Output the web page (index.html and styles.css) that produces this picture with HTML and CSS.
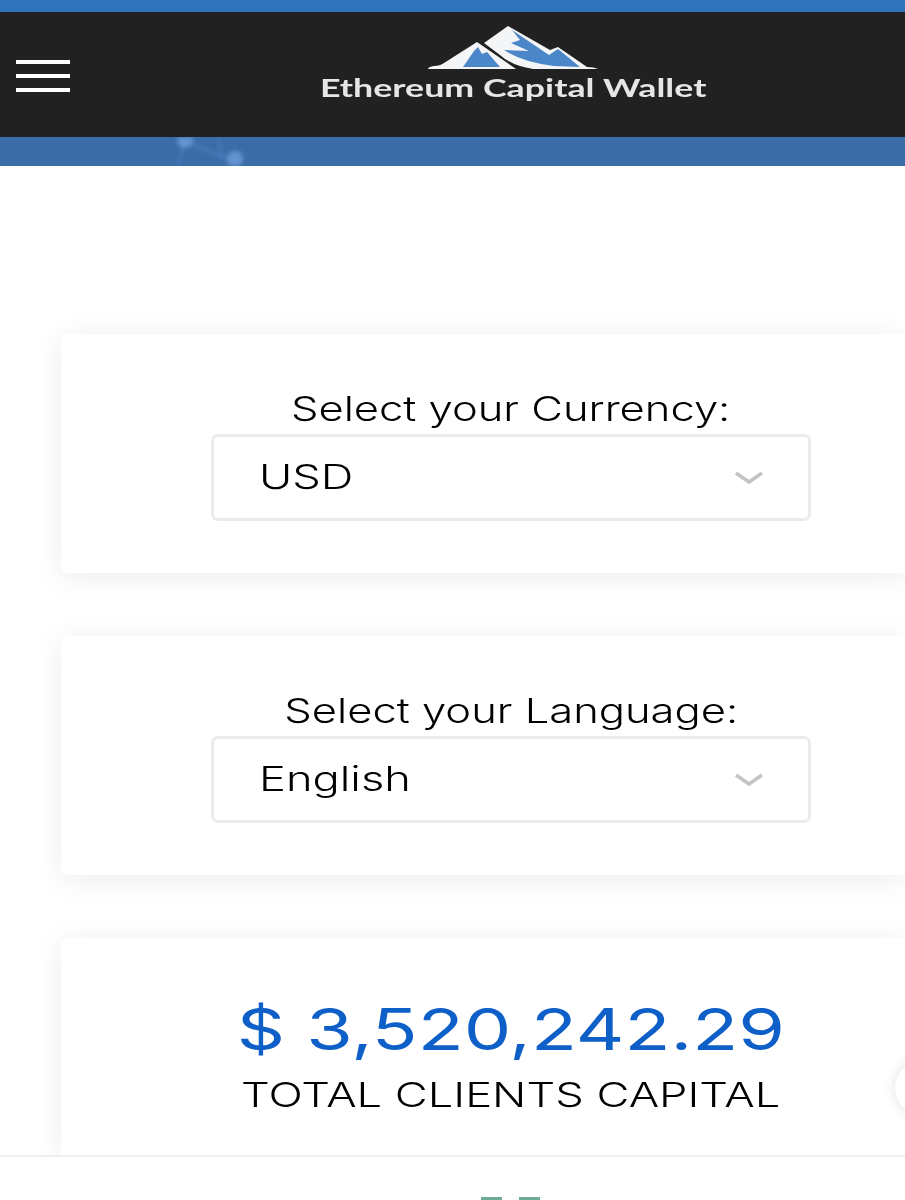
FILE: index.html
```html
<!DOCTYPE html>
<html lang="en">

<head>
    <meta charset="UTF-8">
    <meta name="viewport" content="width=device-width, initial-scale=1.0">
    <title>Ethereum Capital Wallet</title>
    <link rel="stylesheet" href="styles.css">
</head>

<body>
    <div class="topbar"></div>

    <div class="navbar">
        <div class="burger">
            <span></span>
            <span></span>
            <span></span>
        </div>
        <div class="brand">
            <svg class="logo" width="170" height="44" viewBox="0 0 170 44">
                <path fill="#f4f5f6" d="M0 43 Q0 41 6 40 Q12 40 16 37 L49 16 L88 43 Z"/>
                <path fill="#4a86c8" d="M35 41 L46 25 L50 21 L54 28 L59 26 L72 41 Z"/>
                <path fill="#f4f5f6" d="M56 17 L80 0 L122 24 L130 21 L159 41 Q166 41 170 43 L105 43 Q84 40 72 29 Z"/>
                <path fill="#4a86c8" d="M84 4 L92 14 L83 17 L101 25 L76 24 Q94 36 126 40 L152 41 L130 23 L121 29 Z"/>
            </svg>
            <div class="brand-name"><span>Ethereum Capital Wallet</span></div>
        </div>
    </div>

    <div class="band">
        <svg class="band-dots" width="90" height="29" viewBox="0 0 90 29">
            <path fill="none" stroke="#5c8fd0" stroke-width="1.5" d="M15 4 L8 29 M15 4 L58 22 M48 0 L52 22"/>
            <circle cx="15" cy="3" r="8" fill="#6f9fdc"/>
            <circle cx="65" cy="22" r="8" fill="#6f9fdc"/>
        </svg>
    </div>

    <div class="content">
        <div class="card">
            <div class="field-label"><span>Select your Currency:</span></div>
            <div class="select-box">
                <span class="select-value">USD</span>
                <svg class="chevron" width="28" height="14" viewBox="0 0 28 14">
                    <path fill="none" stroke="#c4c4c4" stroke-width="3.5" d="M1 2 L14 11 L27 2"/>
                </svg>
            </div>
        </div>

        <div class="card">
            <div class="field-label"><span>Select your Language:</span></div>
            <div class="select-box">
                <span class="select-value">English</span>
                <svg class="chevron" width="28" height="14" viewBox="0 0 28 14">
                    <path fill="none" stroke="#c4c4c4" stroke-width="3.5" d="M1 2 L14 11 L27 2"/>
                </svg>
            </div>
        </div>

        <div class="card card-total">
            <div class="total-amount"><span>$ 3,520,242.29</span></div>
            <div class="total-label"><span>TOTAL CLIENTS CAPITAL</span></div>
        </div>

        <div class="side-clip">
            <div class="side-button"></div>
        </div>
    </div>

    <div class="bottombar">
        <div class="bottom-icon">
            <span></span>
            <span></span>
        </div>
    </div>
</body>

</html>
```

FILE: styles.css
```css
html,
body {
    margin: 0;
    padding: 0;
    height: 1200px;
    overflow: hidden;
}

body {
    font-family: Inter, Arial, sans-serif;
    font-weight: 300;
    background-color: #fff;
    color: #000;
    display: flex;
    flex-direction: column;
}

span {
    display: inline-block;
}

.topbar {
    height: 12px;
    background-color: #2f74bd;
}

.navbar {
    height: 125px;
    padding-left: 121px;
    background-color: #212121;
    position: relative;
    display: flex;
    justify-content: center;
}

.burger {
    position: absolute;
    left: 16px;
    top: 48px;
    width: 54px;
    display: flex;
    flex-direction: column;
    gap: 10px;
}

.burger span {
    display: block;
    height: 4px;
    background-color: #fff;
}

.brand {
    padding-top: 14px;
    display: flex;
    flex-direction: column;
    align-items: center;
}

.logo {
    display: block;
}

.brand-name {
    font-family: Lato, Arial, sans-serif;
    color: #e6e6e6;
    font-size: 25px;
    font-weight: 700;
    line-height: 30px;
    margin-top: 2px;
    white-space: nowrap;
}

.brand-name span {
    transform: scaleX(1.43);
}

.band {
    height: 29px;
    background-color: #3a6ca8;
    padding-left: 170px;
    overflow: hidden;
}

.band-dots {
    display: block;
    filter: blur(2px);
    opacity: 0.8;
}

.content {
    position: relative;
    height: 989px;
    padding: 168px 0 0 61px;
    box-sizing: border-box;
    display: flex;
    flex-direction: column;
    gap: 63px;
}

.card {
    height: 239px;
    flex: none;
    background-color: #fff;
    border-radius: 6px 0 0 6px;
    box-shadow: 0 4px 30px rgba(0, 0, 0, 0.08);
    padding: 53px 0 0 56px;
    box-sizing: border-box;
    display: flex;
    flex-direction: column;
    align-items: center;
}

.field-label {
    font-size: 34px;
    line-height: 44px;
    white-space: nowrap;
    text-align: center;
}

.field-label span {
    transform: scaleX(1.28);
}

.select-box {
    width: 600px;
    height: 87px;
    margin-top: 3px;
    box-sizing: border-box;
    border: 3px solid #ebebeb;
    border-radius: 7px;
    padding: 0 45px 0 45px;
    display: flex;
    align-items: center;
    justify-content: space-between;
}

.select-value {
    font-size: 34px;
    margin-top: -2px;
    transform: scaleX(1.33);
    transform-origin: left center;
}

.card-total {
    height: 217px;
    border-radius: 6px 0 0 0;
    padding-top: 53px;
}

.total-amount {
    color: #0f5fc8;
    font-size: 58px;
    font-weight: 400;
    line-height: 76px;
    white-space: nowrap;
}

.total-amount span {
    transform: scaleX(1.3);
}

.total-label {
    font-size: 34px;
    line-height: 56px;
    white-space: nowrap;
}

.total-label span {
    transform: scaleX(1.33);
}

.side-clip {
    position: absolute;
    right: 0;
    top: 880px;
    width: 30px;
    height: 84px;
    overflow: hidden;
}

.side-button {
    width: 56px;
    height: 56px;
    margin: 14px 0 0 20px;
    border-radius: 50%;
    background-color: #fff;
    box-shadow: 0 0 14px rgba(0, 0, 0, 0.12);
}

.bottombar {
    flex: none;
    height: 45px;
    background-color: #fff;
    border-top: 2px solid #efefef;
    box-sizing: border-box;
    position: relative;
}

.bottom-icon {
    position: absolute;
    left: 481px;
    top: 40px;
    display: flex;
    gap: 17px;
}

.bottom-icon span {
    width: 21px;
    height: 3px;
    background-color: #6fa99a;
}
```
